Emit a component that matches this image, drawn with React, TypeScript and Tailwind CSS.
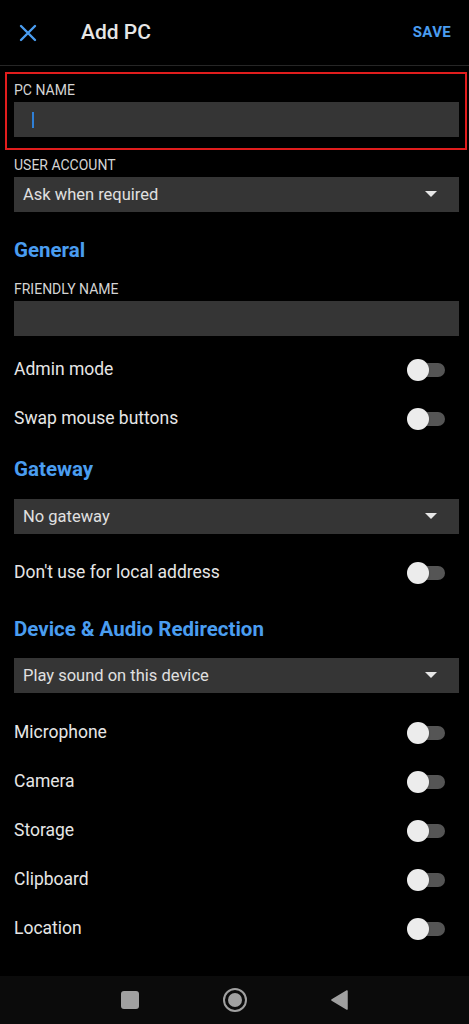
import React from "react";

const font = { fontFamily: "Roboto, 'Noto Sans', sans-serif" };

function Toggle() {
  return (
    <div className="relative w-[40px] h-[24px] shrink-0">
      <div className="absolute left-[12px] top-[5px] w-[26px] h-[14px] rounded-full bg-[#555555]" />
      <div className="absolute left-0 top-[1px] w-[22px] h-[22px] rounded-full bg-[#ececec] shadow" />
    </div>
  );
}

function ToggleRow({ label }: { label: string }) {
  return (
    <div className="h-[49px] flex items-center justify-between pr-[12px]">
      <span className="text-[17.5px] text-[#e6e6e6]">{label}</span>
      <Toggle />
    </div>
  );
}

function Select({ value }: { value: string }) {
  return (
    <div className="h-[35px] bg-[#353535] flex items-center justify-between pl-[9px] pr-[22px]">
      <span className="text-[16.5px] text-[#e0e0e0] pt-[2px]">{value}</span>
      <svg width="12" height="7" viewBox="0 0 12 7">
        <path d="M0 0 L12 0 L6 6 Z" fill="#e6e6e6" />
      </svg>
    </div>
  );
}

function Label({ text }: { text: string }) {
  return <div className="text-[14px] leading-[16px] text-[#d4d4d4]">{text}</div>;
}

function Heading({ text }: { text: string }) {
  return (
    <div className="text-[20.5px] leading-[26px] font-bold text-[#4a9df0]">{text}</div>
  );
}

export default function App() {
  return (
    <div className="w-[469px] h-[1024px] bg-black flex flex-col overflow-hidden" style={font}>
      <div className="h-[66px] shrink-0 flex items-center border-b border-[#262626] pl-[19px] pr-[18px]">
        <svg width="18" height="18" viewBox="0 0 18 18">
          <path d="M2 2 L16 16 M16 2 L2 16" stroke="#4a9df0" strokeWidth="2.4" strokeLinecap="round" />
        </svg>
        <span className="ml-[44px] text-[21px] text-[#e6e6e6] font-medium">Add PC</span>
        <span className="ml-auto text-[15px] font-bold text-[#4a9df0] tracking-[0.3px]">SAVE</span>
      </div>

      <div className="flex-1 flex flex-col">
        <div className="ml-[5px] mr-[2px] mt-[6px] border-2 border-[#e11d1d] pl-[7px] pr-[6px] pt-[8px] pb-[11px]">
          <Label text="PC NAME" />
          <div className="mt-[4px] h-[35px] bg-[#353535] flex items-center pl-[18px]">
            <div className="w-[2px] h-[16px] bg-[#2f7fd6]" />
          </div>
        </div>

        <div className="pl-[14px] pr-[10px] flex flex-col">
          <div className="mt-[7px]">
            <Label text="USER ACCOUNT" />
          </div>
          <div className="mt-[4px]">
            <Select value="Ask when required" />
          </div>

          <div className="mt-[25px]">
            <Heading text="General" />
          </div>
          <div className="mt-[18px]">
            <Label text="FRIENDLY NAME" />
          </div>
          <div className="mt-[4px] h-[35px] bg-[#353535]" />

          <div className="mt-[9px]">
            <ToggleRow label="Admin mode" />
            <ToggleRow label="Swap mouse buttons" />
          </div>

          <div className="mt-[13px]">
            <Heading text="Gateway" />
          </div>
          <div className="mt-[17px]">
            <Select value="No gateway" />
          </div>
          <div className="mt-[14px]">
            <ToggleRow label="Don't use for local address" />
          </div>

          <div className="mt-[19px]">
            <Heading text="Device & Audio Redirection" />
          </div>
          <div className="mt-[16px]">
            <Select value="Play sound on this device" />
          </div>
          <div className="mt-[15px]">
            <ToggleRow label="Microphone" />
            <ToggleRow label="Camera" />
            <ToggleRow label="Storage" />
            <ToggleRow label="Clipboard" />
            <ToggleRow label="Location" />
          </div>
        </div>
      </div>

      <div className="h-[48px] shrink-0 bg-[#0b0b0b] flex items-center">
        <div className="ml-[121px] w-[18px] h-[18px] rounded-[3px] bg-[#a0a0a0]" />
        <div className="ml-[84px] w-[24px] h-[24px] rounded-full border-2 border-[#a0a0a0] flex items-center justify-center">
          <div className="w-[14px] h-[14px] rounded-full bg-[#a0a0a0]" />
        </div>
        <svg className="ml-[84px]" width="17" height="20" viewBox="0 0 17 20">
          <path d="M16 1 L1 10 L16 19 Z" fill="#a0a0a0" stroke="#a0a0a0" strokeLinejoin="round" strokeWidth="1.5" />
        </svg>
      </div>
    </div>
  );
}
